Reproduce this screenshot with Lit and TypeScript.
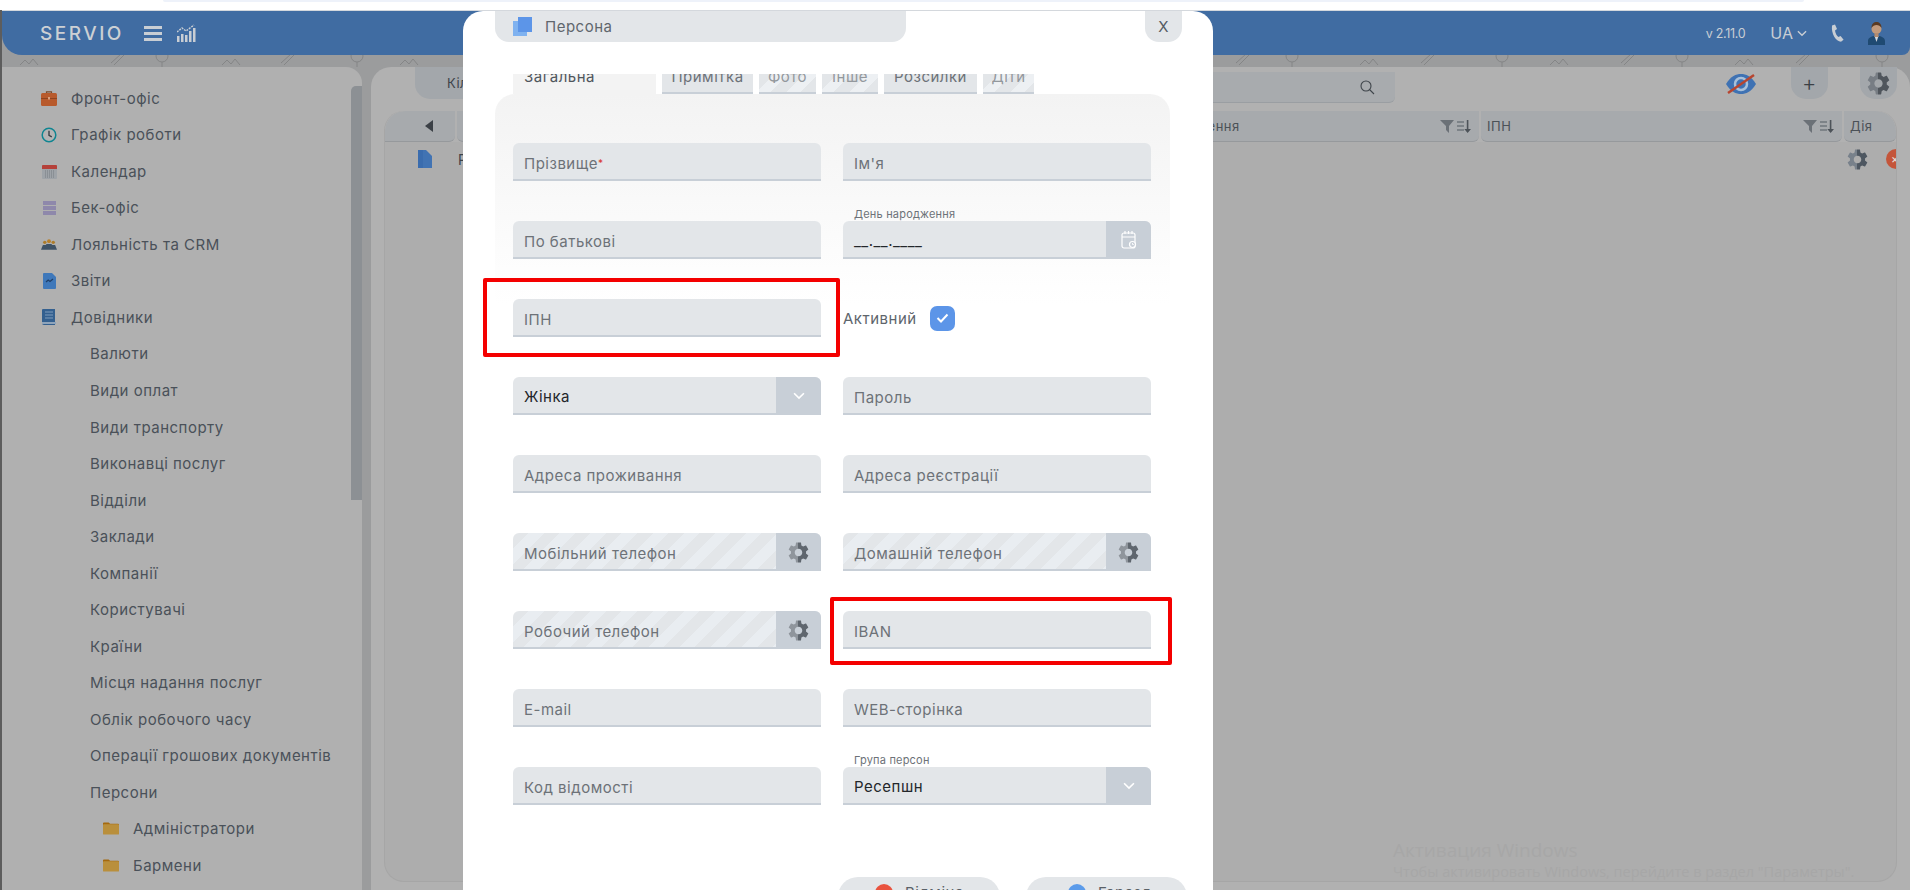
import { LitElement, html, css, svg } from "lit";
import { customElement } from "lit/decorators.js";

const GEAR =
  "M19.14 12.94c.04-.3.06-.61.06-.94 0-.32-.02-.64-.07-.94l2.03-1.58c.18-.14.23-.41.12-.61l-1.92-3.32c-.12-.22-.37-.29-.59-.22l-2.39.96c-.5-.38-1.03-.7-1.62-.94l-.36-2.54c-.04-.24-.24-.41-.48-.41h-3.84c-.24 0-.43.17-.47.41l-.36 2.54c-.59.24-1.13.57-1.62.94l-2.39-.96c-.22-.08-.47 0-.59.22L2.74 8.87c-.12.21-.08.47.12.61l2.03 1.58c-.05.3-.09.63-.09.94s.02.64.07.94l-2.03 1.58c-.18.14-.23.41-.12.61l1.92 3.32c.12.22.37.29.59.22l2.39-.96c.5.38 1.03.7 1.62.94l.36 2.54c.05.24.24.41.48.41h3.84c.24 0 .44-.17.47-.41l.36-2.54c.59-.24 1.13-.56 1.62-.94l2.39.96c.22.08.47 0 .59-.22l1.92-3.32c.12-.22.07-.47-.12-.61l-2.01-1.58zM12 15.6c-1.98 0-3.6-1.62-3.6-3.6s1.62-3.6 3.6-3.6 3.6 1.62 3.6 3.6-1.62 3.6-3.6 3.6z";

let gearId = 0;
const gear = (size: number, light: string, dark: string) => {
  const id = `gear${gearId++}`;
  return html`<svg width=${size} height=${size} viewBox="2 2 20 20">
    <defs><linearGradient id=${id}><stop offset="50%" stop-color=${light}></stop><stop offset="50%" stop-color=${dark}></stop></linearGradient></defs>
    <path d=${GEAR} fill=${`url(#${id})`}></path>
  </svg>`;
};

const chevron = (color: string, w = 11, h = 7) =>
  html`<svg width=${w} height=${h} viewBox="0 0 11 7"><path d="M1 1l4.5 4.5L10 1" fill="none" stroke=${color} stroke-width="1.5"></path></svg>`;

const filterSort = html`<span class="fs">
  <svg width="15" height="13" viewBox="0 0 15 13"><path d="M0 0h14L9 6v7L6 10V6z" fill="#6b7177"></path></svg>
  <svg width="14" height="13" viewBox="0 0 14 13"><path d="M0 1h7v2H0zM0 5h7v2H0zM0 9h7v2H0z" fill="#7d8388"></path><path d="M9.8 0h1.6v9H14l-3.4 4L7.3 9h2.5z" fill="#4d5359"></path></svg>
</span>`;

const icons: Record<string, unknown> = {
  case: html`<svg width="16" height="15" viewBox="0 0 16 15"><path d="M5.5 2V.8h5V2" fill="none" stroke="#7b4a2a" stroke-width="1.2"></path><rect y="2" width="16" height="13" rx="1.5" fill="#b85a2c"></rect><rect y="7" width="16" height="1" fill="#8f431f"></rect><rect x="7" y="6" width="2" height="2.5" fill="#d9a07e"></rect></svg>`,
  clock: html`<svg width="16" height="16" viewBox="0 0 16 16"><circle cx="8" cy="8" r="6.8" fill="#b4b4b4" stroke="#0f8591" stroke-width="1.5"></circle><path d="M8 3.8V8.4l2.8 1.4" fill="none" stroke="#3a3f45" stroke-width="1.4"></path></svg>`,
  cal: html`<svg width="15" height="15" viewBox="0 0 15 15"><rect y="1" width="15" height="14" rx="1" fill="#9ea3a8"></rect><path d="M0 2a1 1 0 011-1h13a1 1 0 011 1v3H0z" fill="#b5413a"></path><path d="M3 7h9M3 9h9M3 11h9M3 13h9" stroke="#777c82" stroke-dasharray="1 1"></path></svg>`,
  stack: html`<svg width="13" height="14" viewBox="0 0 13 14"><path d="M0 0h13v4H0zM0 5h13v4H0zM0 10h13v4H0z" fill="#8e88ab"></path></svg>`,
  people: html`<svg width="17" height="11" viewBox="0 0 17 11"><circle cx="4" cy="3.2" r="1.8" fill="#ad7c2a"></circle><circle cx="8.5" cy="2" r="2" fill="#b9802a"></circle><circle cx="13" cy="3.2" r="1.8" fill="#ad7c2a"></circle><path d="M0 11l2-5h3l1-1h5l1 1h3l2 5z" fill="#3f5367"></path></svg>`,
  report: html`<svg width="13" height="16" viewBox="0 0 13 16"><path d="M1 0h8l4 4v11a1 1 0 01-1 1H1a1 1 0 01-1-1V1a1 1 0 011-1z" fill="#3f78ba"></path><path d="M3 9l2.2-2L7 8.4 10 6" fill="none" stroke="#1f3f69" stroke-width="1.3"></path></svg>`,
  book: html`<svg width="14" height="16" viewBox="0 0 14 16"><path d="M1 0h12v16H2a2 2 0 01-2-2V1a1 1 0 011-1z" fill="#34608f"></path><path d="M3 3h8M3 6h8M3 9h8" stroke="#7f9cbc" stroke-width="1"></path><rect y="13" width="14" height="2" fill="#8fa4ba"></rect></svg>`,
  folder: html`<svg width="17" height="13" viewBox="0 0 17 13"><path d="M1 0h5l1.500 1.500H16a1 1 0 011 1V3H0V1a1 1 0 011-1z" fill="#a4690f"></path><rect y="2" width="17" height="11" rx="1" fill="#b98f3c"></rect></svg>`,
};

type MenuItem = { t: string; icon?: string; level: 0 | 1 | 2 };
const menu: MenuItem[] = [
  { t: "Фронт-офіс", icon: "case", level: 0 },
  { t: "Графік роботи", icon: "clock", level: 0 },
  { t: "Календар", icon: "cal", level: 0 },
  { t: "Бек-офіс", icon: "stack", level: 0 },
  { t: "Лояльність та CRM", icon: "people", level: 0 },
  { t: "Звіти", icon: "report", level: 0 },
  { t: "Довідники", icon: "book", level: 0 },
  ...[
    "Валюти", "Види оплат", "Види транспорту", "Виконавці послуг", "Відділи", "Заклади", "Компанії",
    "Користувачі", "Країни", "Місця надання послуг", "Облік робочого часу", "Операції грошових документів", "Персони",
  ].map((t): MenuItem => ({ t, level: 1 })),
  { t: "Адміністратори", icon: "folder", level: 2 },
  { t: "Бармени", icon: "folder", level: 2 },
];

type Field =
  | { kind: "input"; ph: string; req?: boolean; label?: string; value?: string; stripe?: boolean; addon?: "gear" | "date" | "select"; }
  | { kind: "active" };

const fields: Field[] = [
  { kind: "input", ph: "Прізвище", req: true },
  { kind: "input", ph: "Ім'я" },
  { kind: "input", ph: "По батькові" },
  { kind: "input", ph: "", label: "День народження", value: "__.__.____", addon: "date" },
  { kind: "input", ph: "ІПН" },
  { kind: "active" },
  { kind: "input", ph: "", value: "Жінка", addon: "select" },
  { kind: "input", ph: "Пароль" },
  { kind: "input", ph: "Адреса проживання" },
  { kind: "input", ph: "Адреса реєстрації" },
  { kind: "input", ph: "Мобільний телефон", stripe: true, addon: "gear" },
  { kind: "input", ph: "Домашній телефон", stripe: true, addon: "gear" },
  { kind: "input", ph: "Робочий телефон", stripe: true, addon: "gear" },
  { kind: "input", ph: "IBAN" },
  { kind: "input", ph: "E-mail" },
  { kind: "input", ph: "WEB-сторінка" },
  { kind: "input", ph: "Код відомості" },
  { kind: "input", ph: "", label: "Група персон", value: "Ресепшн", addon: "select" },
];

const tabs = [
  { t: "Загальна", w: 143, cls: "active" },
  { t: "Примітка", w: 91, cls: "" },
  { t: "Фото", w: 57, cls: "off" },
  { t: "Інше", w: 56, cls: "off" },
  { t: "Розсилки", w: 93, cls: "" },
  { t: "Діти", w: 51, cls: "off" },
];

const patternMarks = [30, 115, 160, 232, 285, 355, 410, 1240, 1290, 1370, 1425, 1500, 1560, 1625, 1680, 1745, 1800, 1880];

@customElement("app-root")
export class AppRoot extends LitElement {
  static styles = css`
    :host { display: block; width: 1910px; height: 890px; font-family: Inter, "Noto Sans", "Liberation Sans", sans-serif; letter-spacing: .5px; }
    * { box-sizing: border-box; }
    .shell { position: relative; width: 1910px; height: 890px; overflow: hidden; background: #fff; }
    .topstrip { height: 10px; }
    .topbar { height: 2px; margin: 0 106px 0 163px; background: #eef2fa; border-radius: 0 0 4px 4px; }
    .app { height: 880px; background: #9b9c9d; border-left: 2px solid #5d5d5d; display: flex; flex-direction: column; position: relative; }
    .marks { position: absolute; left: 0; top: 45px; }
    .header { height: 45px; flex: none; background: #406ca2; border-top: 1px solid #d4d8dd; border-radius: 0 0 8px 20px; display: flex; align-items: center; padding: 0 25px 0 38px; color: #c9ced4; position: relative; }
    .logo { font-size: 19px; font-weight: 500; letter-spacing: 2.5px; width: 104px; color: #ccd0d4; }
    .burger { width: 18px; height: 15px; display: flex; flex-direction: column; justify-content: space-between; margin-right: 15px; }
    .burger i { display: block; height: 3px; background: #c9ced4; }
    .hspace { flex: 1; }
    .ver { font-size: 12.5px; letter-spacing: -.3px; margin-right: 25px; }
    .lang { font-size: 16px; margin-right: 4px; letter-spacing: 0; }
    .lang-ch { margin-right: 23px; display: flex; }
    .phone { margin-right: 24px; display: flex; }
    .body { flex: 1; display: flex; gap: 9px; padding-top: 12px; min-height: 0; position: relative; }
    .side { width: 360px; flex: none; background: #b0b0b0; border-radius: 0 16px 0 0; display: flex; overflow: hidden; }
    .list { flex: 1; padding-top: 13px; }
    .sb { width: 11px; height: 414px; margin-top: 19px; background: #8c9094; border-radius: 5px 0 0 0; }
    .mi { height: 36.54px; display: flex; align-items: center; font-size: 15px; color: #4a5159; white-space: nowrap; }
    .mi .ic { width: 16px; display: flex; justify-content: center; flex: none; }
    .l0 { padding-left: 39px; gap: 14px; }
    .l1 { padding-left: 88px; }
    .l2 { padding-left: 101px; gap: 14px; }
    .main { flex: 1; background: #b1b1b1; border-radius: 20px 20px 0 0; padding: 0 13px; display: flex; flex-direction: column; }
    .tools { height: 44px; flex: none; display: flex; align-items: flex-start; }
    .ttab { margin-left: 31px; width: 300px; height: 32px; background: #a3a7ab; border-radius: 0 0 0 15px; font-size: 13px; color: #3d434a; display: flex; align-items: center; padding-left: 32px; }
    .search { margin: 5px 0 0 80px; width: 600px; height: 31px; background: #a8abae; border-radius: 0 0 6px 0; border-bottom: 1px solid #9a9ea2; display: flex; align-items: center; justify-content: flex-end; padding-right: 20px; }
    .eye { margin: 5px 0 0 331px; }
    .plus { margin-left: 35px; width: 37px; height: 32px; background: #a3a7ab; border-radius: 0 0 15px 15px; font-size: 22px; font-weight: 300; color: #3b4046; display: flex; align-items: center; justify-content: center; }
    .gtab { margin-left: 32px; width: 37px; height: 32px; background: #a3a7ab; border-radius: 0 0 15px 15px; display: flex; align-items: center; justify-content: center; }
    .table { height: 771px; flex: none; background: #adadad; border: 1px solid #a6a6a6; border-top: 0; border-radius: 20px; overflow: hidden; }
    .thead { height: 31px; display: flex; gap: 2px; background: #b1b1b1; }
    .th { background: #a7aaad; border-bottom: 1px solid #96999c; border-radius: 0 0 6px 6px; font-size: 13px; color: #4b5157; display: flex; align-items: center; padding-left: 6px; position: relative; }
    .th.a { width: 70px; border-radius: 20px 0 6px 0; justify-content: center; padding-left: 18px; }
    .th.p { width: 653px; }
    .th.d { width: 367px; }
    .th.i { width: 361px; }
    .th.x { flex: 1; border-radius: 0 20px 6px 6px; }
    .fs { margin-left: auto; display: flex; gap: 2px; margin-right: 8px; }
    .tr { display: flex; align-items: center; height: 34px; padding-left: 33px; font-size: 14px; color: #3d434a; }
    .tr .n { margin-left: 26px; }
    .tr .g { margin-left: auto; display: flex; margin-right: 18px; }
    .tr .close { width: 20px; height: 20px; border-radius: 50%; background: #c4553a; margin-right: -10px; flex: none; color: #e8e0dc; font-size: 12px; line-height: 20px; padding-left: 5px; letter-spacing: 0; }
    .wm { position: absolute; left: 1393px; top: 837px; color: #a7a7a7; font-family: "Open Sans", "Liberation Sans", sans-serif; white-space: nowrap; letter-spacing: 0; }
    .wm div:first-child { font-size: 19px; line-height: 26px; }
    .wm div:last-child { font-size: 14.5px; line-height: 20px; margin-top: -1px; }

    .modal { position: absolute; z-index: 2; left: 463px; top: 11px; width: 750px; height: 900px; background: #fff; border-radius: 20px; padding: 0 31px 0 32px; }
    .mhead { height: 31px; display: flex; justify-content: space-between; }
    .mtitle { width: 411px; background: #e3e6e9; border-radius: 0 0 14px 14px; display: flex; align-items: center; padding-left: 18px; gap: 13px; font-size: 15px; color: #5f666d; }
    .mx { width: 37px; background: #e3e6e9; border-radius: 0 0 14px 14px; display: flex; align-items: center; justify-content: center; font-size: 15px; color: #555c63; }
    .mbody { margin-top: 32px; display: flex; gap: 12px; align-items: flex-start; }
    .col { width: 675px; flex: none; }
    .mscroll { width: 6px; height: 775px; margin-top: 16px; background: #c8cfd7; border-radius: 6px 0 6px 6px; }
    .tabs { height: 20px; display: flex; gap: 6px; padding-left: 18px; }
    .tab { height: 20px; overflow: hidden; line-height: 6px; font-size: 15px; color: #6d7278; background: #e3e6e9; border-bottom: 2px solid #c8cfd7; text-align: center; }
    .tab.active { background: #f3f3f3; border-bottom: 0; color: #50565c; text-align: left; padding-left: 11px; }
    .tab.off { color: #93989d; background: repeating-linear-gradient(135deg, #e3e6e9 0 11px, #edf0f3 11px 21px); }
    .panel { height: 771px; padding: 49px 19px 0 18px; border-radius: 20px; background: linear-gradient(#f3f3f3 0, #fff 210px); display: grid; grid-template-columns: 308px 308px; grid-auto-rows: 38px; column-gap: 22px; row-gap: 40px; }
    .f { position: relative; height: 38px; background: #e3e6e9; border-bottom: 2px solid #c8cfd7; border-radius: 6px 6px 0 0; display: flex; font-size: 15px; color: #6d7278; }
    .f.stripe { background: repeating-linear-gradient(135deg, #e3e6e9 0 11px, #e9edf1 11px 22px); }
    .f .txt { flex: 1; display: flex; align-items: center; padding: 4px 0 0 11px; white-space: nowrap; }
    .f .txt.val { color: #23272b; padding-top: 3px; }
    .req { color: #d8342c; font-size: 10px; align-self: flex-start; margin-top: 10px; }
    .lbl { position: absolute; left: 11px; bottom: 100%; font-size: 11px; line-height: 16px; color: #6d7278; white-space: nowrap; margin-bottom: -1px; letter-spacing: .2px; }
    .addon { width: 45px; flex: none; background: #c8cfd7; border-radius: 0 6px 0 0; margin-bottom: -2px; display: flex; align-items: center; justify-content: center; }
    .act { display: flex; align-items: center; gap: 13px; font-size: 15px; color: #5e656c; }
    .check { width: 25px; height: 25px; border-radius: 7px; background: #5c95e8; display: flex; align-items: center; justify-content: center; }
    .mfoot { position: absolute; left: 375px; top: 866px; display: flex; gap: 26px; }
    .btn { height: 40px; background: #e3e6e9; border-radius: 20px 20px 0 0; display: flex; align-items: flex-start; font-size: 15px; color: #5a6167; padding-top: 7px; line-height: 18px; gap: 12px; }
    .btn.c { width: 162px; padding-left: 37px; }
    .btn.o { width: 161px; padding-left: 42px; }
    .dot { width: 18px; height: 18px; border-radius: 50%; }
    .dot.r { background: #e9533f; }
    .dot.b { background: #5b9bea; }
    .red { position: absolute; z-index: 3; border: 4px solid #f40000; border-radius: 2px; pointer-events: none; }
    .red.one { left: 483px; top: 278px; width: 357px; height: 79px; }
    .red.two { left: 830px; top: 597px; width: 342px; height: 68px; }
  `;

  private renderField(f: Field) {
    if (f.kind === "active") {
      return html`<div class="act">Активний
        <span class="check"><svg width="13" height="10" viewBox="0 0 13 10"><path d="M1.5 5l3.5 3.5 6.5-7" fill="none" stroke="#fff" stroke-width="2"></path></svg></span>
      </div>`;
    }
    return html`<div class="f ${f.stripe ? "stripe" : ""}">
      ${f.label ? html`<span class="lbl">${f.label}</span>` : ""}
      <div class="txt ${f.value ? "val" : ""}">${f.value ?? f.ph}${f.req ? html`<span class="req">*</span>` : ""}</div>
      ${f.addon === "gear" ? html`<div class="addon">${gear(21, "#8f959c", "#5f666e")}</div>` : ""}
      ${f.addon === "select" ? html`<div class="addon">${chevron("#fff", 12, 8)}</div>` : ""}
      ${f.addon === "date"
        ? html`<div class="addon"><svg width="16" height="20" viewBox="0 0 16 20" fill="none" stroke="#fff" stroke-width="1.2"><rect x="1" y="3" width="13" height="15" rx="2"></rect><path d="M4 1v3M7.5 1v3M11 1v3M1 7h13"></path><circle cx="11.5" cy="14.5" r="3" fill="#c8cfd7"></circle><path d="M11.5 13v1.5h1.3" stroke-width=".9"></path></svg></div>`
        : ""}
    </div>`;
  }

  render() {
    return html`<div class="shell">
      <div class="topstrip"><div class="topbar"></div></div>
      <div class="app">
        <svg class="marks" width="1908" height="12" fill="none" stroke="#848586" stroke-width="1">
          ${patternMarks.map((x, i) =>
            i % 3 === 0
              ? svg`<path d=${`M${x - 12} 10l5-5 4 4 4-5 5 6`}></path>`
              : i % 3 === 1
                ? svg`<path d=${`M${x - 6} 8l10-9M${x - 3} 10l10-10`}></path>`
                : svg`<circle cx=${x} cy="1" r="6"></circle><path d=${`M${x} 7v5`}></path>`
          )}
        </svg>
        <div class="header">
          <div class="logo">SERVIO</div>
          <div class="burger"><i></i><i></i><i></i></div>
          <svg width="19" height="18" viewBox="0 0 19 18"><path d="M0 12h2.500v6H0zM4 10h2.500v8H4zM8 11h2.500v7H8zM12 7h2.500v11H12zM16 4h2.500v14H16z" fill="#c9ced4"></path><path d="M0 8l5-4 4 3 8-6" fill="none" stroke="#c9ced4" stroke-width="1.4" stroke-dasharray="2 1"></path></svg>
          <div class="hspace"></div>
          <span class="ver">v 2.11.0</span>
          <span class="lang">UA</span>
          <span class="lang-ch">${chevron("#c9ced4", 10, 7)}</span>
          <span class="phone"><svg width="14" height="18" viewBox="0 0 14 18"><path d="M2 1.500L5 .5l2 4.500-2 1.500c.3 2.500 1.600 5 3.400 6.500l2.200-1 3 3.700-2.600 2C6 17.500 1 10 2 1.500z" fill="#c9ced4"></path></svg></span>
          <svg width="17" height="24" viewBox="0 0 17 24"><path d="M0 24v-4c0-3 3-4 5-5h7c2 1 5 2 5 5v4z" fill="#1f4a72"></path><path d="M6.500 15h4l-2 6z" fill="#d7dade"></path><circle cx="8.500" cy="8" r="5" fill="#c29a7c"></circle><path d="M3.500 7c0-5 3-6 5-6s5 1 5 6c-1-2-3-3-5-3s-4 1-5 3z" fill="#5a3a22"></path><rect x="6.500" y="12" width="4" height="4" fill="#b48c6f"></rect></svg>
        </div>
        <div class="body">
          <aside class="side">
            <div class="list">
              ${menu.map(
                (m) => html`<div class="mi l${m.level}">
                  ${m.icon ? html`<span class="ic">${icons[m.icon]}</span>` : ""}
                  <span>${m.t}</span>
                </div>`
              )}
            </div>
            <div class="sb"></div>
          </aside>
          <section class="main">
            <div class="tools">
              <div class="ttab">Кількість</div>
              <div class="search"><svg width="15" height="15" viewBox="0 0 15 15" fill="none" stroke="#3f454b" stroke-width="1.1"><circle cx="6" cy="6" r="5"></circle><path d="M9.500 9.500l4.500 4.500"></path></svg></div>
              <svg class="eye" width="30" height="24" viewBox="0 0 30 24"><path d="M0 12C5 4 10 2 15 2s10 2 15 10c-5 8-10 10-15 10S5 20 0 12z" fill="#3f72b3"></path><circle cx="15" cy="12" r="6" fill="none" stroke="#a9c0d9" stroke-width="2.500"></circle><path d="M2 21L28 3" stroke="#b8452f" stroke-width="2.500"></path></svg>
              <div class="plus">+</div>
              <div class="gtab">${gear(23, "#777d84", "#4f555c")}</div>
            </div>
            <div class="table">
              <div class="thead">
                <div class="th a"><svg width="8" height="12" viewBox="0 0 8 12"><path d="M8 0v12L0 6z" fill="#3b4046"></path></svg></div>
                <div class="th p">Прізвище</div>
                <div class="th d"><span>Дата народження</span>${filterSort}</div>
                <div class="th i"><span>ІПН</span>${filterSort}</div>
                <div class="th x">Дія</div>
              </div>
              <div class="tr">
                <svg width="14" height="18" viewBox="0 0 14 18"><path d="M0 0h8l6 6v12H0z" fill="#4173b3"></path><path d="M0 0h5v18H0z" fill="#3a6cae"></path></svg>
                <span class="n">Ресепшн</span>
                <span class="g">${gear(21, "#78818b", "#4e5761")}</span>
                <span class="close">×</span>
              </div>
            </div>
          </section>
        </div>
      </div>
      <div class="wm"><div>Активация Windows</div><div>Чтобы активировать Windows, перейдите в раздел "Параметры".</div></div>

      <div class="modal">
        <div class="mhead">
          <div class="mtitle">
            <svg width="19" height="19" viewBox="0 0 19 19"><rect y="4" width="14" height="15" fill="#7fb2f0"></rect><rect x="5" width="14" height="15" fill="#5c95e8"></rect></svg>
            <span>Персона</span>
          </div>
          <div class="mx">X</div>
        </div>
        <div class="mbody">
          <div class="col">
            <div class="tabs">
              ${tabs.map((t) => html`<div class="tab ${t.cls}" style="width:${t.w}px">${t.t}</div>`)}
            </div>
            <div class="panel">${fields.map((f) => this.renderField(f))}</div>
          </div>
          <div class="mscroll"></div>
        </div>
        <div class="mfoot">
          <div class="btn c"><span class="dot r"></span>Відміна</div>
          <div class="btn o"><span class="dot b"></span>Гаразд</div>
        </div>
      </div>
      <div class="red one"></div>
      <div class="red two"></div>
    </div>`;
  }
}
